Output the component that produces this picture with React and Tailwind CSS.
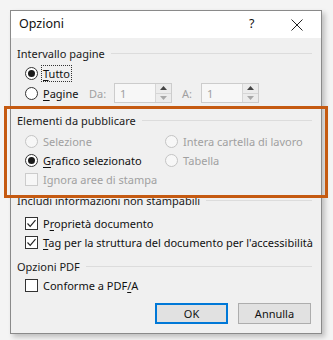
import React from "react";

function Radio({ checked, disabled }) {
  return (
    <span
      className={`flex h-[13px] w-[13px] shrink-0 items-center justify-center rounded-full border ${
        disabled ? "border-[#c4c4c4] bg-[#f7f7f7]" : "border-[#333333] bg-white"
      }`}
    >
      {checked && <span className="h-[7px] w-[7px] rounded-full bg-[#1a1a1a]" />}
    </span>
  );
}

function Check({ checked, disabled }) {
  return (
    <span
      className={`flex h-[13px] w-[13px] shrink-0 items-center justify-center border ${
        disabled ? "border-[#cccccc] bg-[#f7f7f7]" : "border-[#333333] bg-white"
      }`}
    >
      {checked && (
        <svg width="11" height="11" viewBox="0 0 11 11">
          <path d="M1.5 5.5 L4.2 8.3 L9.5 2.2" fill="none" stroke="#222" strokeWidth="1.2" />
        </svg>
      )}
    </span>
  );
}

function Header({ children, className = "" }) {
  return (
    <div className={`flex h-[16px] items-center gap-[6px] pl-[6px] pr-[9px] ${className}`}>
      <span className="whitespace-nowrap text-[#1a1a1a]">{children}</span>
      <span className="h-px flex-1 bg-[#dcdcdc]" />
    </div>
  );
}

function Spin() {
  return (
    <div className="flex h-[20px] w-[58px] border border-[#cccccc] bg-[#f7f7f7]">
      <span className="flex flex-1 items-center pl-[5px] text-[#a0a0a0]">1</span>
      <div className="flex w-[16px] flex-col border-l border-[#d6d6d6]">
        <div className="flex flex-1 items-center justify-center border-b border-[#d6d6d6] bg-[#ececec]">
          <svg width="7" height="4" viewBox="0 0 7 4"><path d="M0 4 L3.5 0 L7 4 Z" fill="#444" /></svg>
        </div>
        <div className="flex flex-1 items-center justify-center bg-[#ececec]">
          <svg width="7" height="4" viewBox="0 0 7 4"><path d="M0 0 L3.5 4 L7 0 Z" fill="#a8a8a8" /></svg>
        </div>
      </div>
    </div>
  );
}

export default function App() {
  return (
    <div
      className="h-[340px] w-[333px] overflow-hidden bg-[#f4f4f4] pl-[10px] pt-[10px] text-[11px] leading-none"
      style={{ fontFamily: '"Noto Sans", "Open Sans", sans-serif' }}
    >
      <div className="relative flex h-[324px] w-[312px] flex-col border border-[#8a8a8a] bg-[#f0f0f0] shadow-[3px_3px_5px_rgba(0,0,0,0.22)]">
        {/* title bar */}
        <div className="flex h-[27px] items-center bg-white pl-[8px]">
          <span className="flex-1 text-[12.5px] text-[#111]">Opzioni</span>
          <span className="w-[27px] text-[12.5px] text-[#111]">?</span>
          <span className="flex w-[45px] items-center justify-center pl-[2px] pr-[6px]">
            <svg width="12" height="12" viewBox="0 0 12 12">
              <path d="M0.5 0.5 L11.5 11.5 M11.5 0.5 L0.5 11.5" stroke="#222" strokeWidth="1" />
            </svg>
          </span>
        </div>

        <div className="flex flex-1 flex-col pt-[7px]">
          <Header>Intervallo pagine</Header>
          <div className="mt-[2px] flex h-[20px] items-center pl-[14px]">
            <Radio checked />
            <span className="ml-[3px] border border-dotted border-[#333] px-[1px] py-[2px] text-[#111]">
              <span className="underline underline-offset-2">T</span>utto
            </span>
          </div>
          <div className="flex h-[20px] items-center pl-[14px]">
            <Radio />
            <span className="ml-[5px] w-[40px] text-[#111]">
              <span className="underline underline-offset-2">P</span>agine
            </span>
            <span className="ml-[6px] w-[25px] text-[#a0a0a0]">Da:</span>
            <Spin />
            <span className="ml-[10px] w-[19px] text-[#a0a0a0]">A:</span>
            <Spin />
          </div>

          <Header className="mt-[9px]">Elementi da pubblicare</Header>
          <div className="mt-[4px] grid grid-cols-[140px_1fr] pl-[14px]">
            <div className="flex h-[18px] items-center">
              <Radio disabled />
              <span className="ml-[5px] text-[#a0a0a0]">Selezione</span>
            </div>
            <div className="flex h-[18px] items-center">
              <Radio disabled />
              <span className="ml-[5px] text-[#a0a0a0]">Intera cartella di lavoro</span>
            </div>
            <div className="mt-[1px] flex h-[18px] items-center">
              <Radio checked />
              <span className="ml-[5px] text-[#111]">
                <span className="underline underline-offset-2">G</span>rafico selezionato
              </span>
            </div>
            <div className="mt-[1px] flex h-[18px] items-center">
              <Radio disabled />
              <span className="ml-[5px] text-[#a0a0a0]">Tabella</span>
            </div>
            <div className="mt-[1px] flex h-[18px] items-center">
              <Check disabled />
              <span className="ml-[5px] whitespace-nowrap text-[#a0a0a0]">Ignora aree di stampa</span>
            </div>
          </div>

          <Header className="mt-[4px]">Includi informazioni non stampabili</Header>
          <div className="mt-[6px] flex h-[18px] items-center pl-[14px]">
            <Check checked />
            <span className="ml-[5px] text-[#111]">
              P<span className="underline underline-offset-2">r</span>oprietà documento
            </span>
          </div>
          <div className="mt-[1px] flex h-[18px] items-center pl-[14px]">
            <Check checked />
            <span className="ml-[5px] whitespace-nowrap text-[#111]">
              <span className="underline underline-offset-2">T</span>ag per la struttura del documento per l'accessibilità
            </span>
          </div>

          <Header className="mt-[7px]">Opzioni PDF</Header>
          <div className="mt-[2px] flex h-[18px] items-center pl-[14px]">
            <Check />
            <span className="ml-[5px] text-[#111]">
              Conforme a PDF<span className="underline underline-offset-2">/</span>A
            </span>
          </div>

          <div className="mt-[9px] flex justify-end gap-[10px] pr-[10px]">
            <button className="flex h-[21px] w-[73px] items-center justify-center border-2 border-[#0078d7] bg-[#e1e1e1] text-[#111]">
              OK
            </button>
            <button className="flex h-[21px] w-[73px] items-center justify-center border border-[#adadad] bg-[#e1e1e1] text-[#111]">
              Annulla
            </button>
          </div>
        </div>

        {/* highlight overlay */}
        <div className="pointer-events-none absolute left-[-7px] top-[95px] h-[92px] w-[324px] border-[3px] border-[#c55a11]" />
      </div>
    </div>
  );
}
